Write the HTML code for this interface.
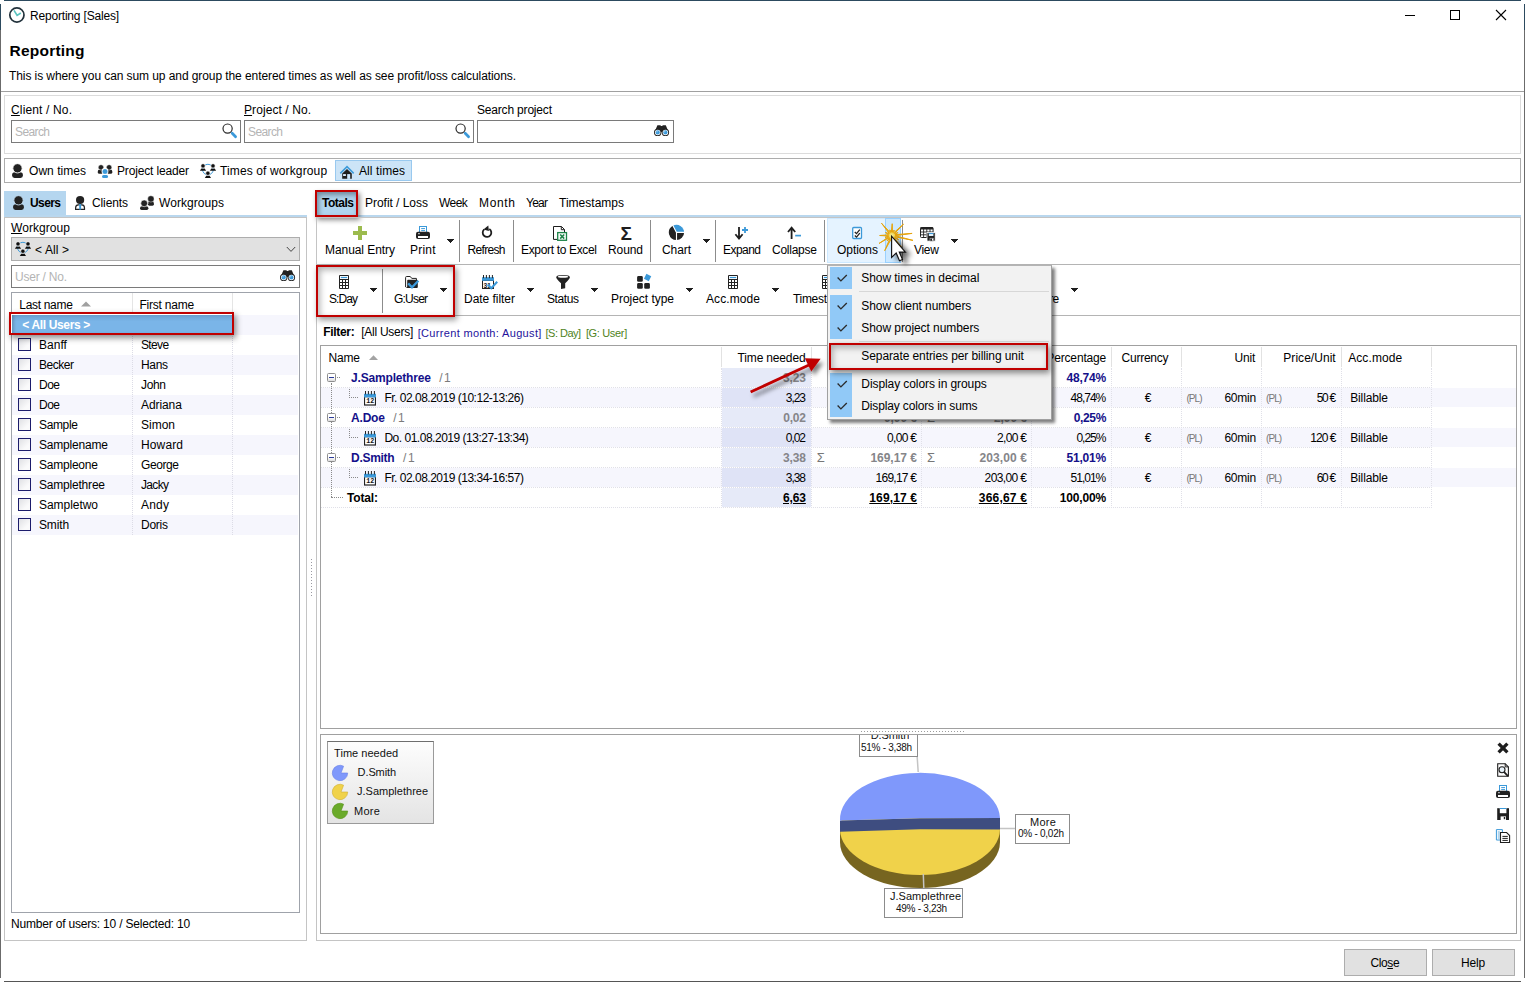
<!DOCTYPE html>
<html lang="en"><head><meta charset="utf-8"><title>Reporting [Sales]</title>
<style>
html,body{margin:0;padding:0;background:#fff;}
body{width:1525px;height:982px;position:relative;overflow:hidden;font-family:"Liberation Sans",sans-serif;font-size:12px;color:#000;}
.b{position:absolute;box-sizing:border-box;display:block;}
.t{position:absolute;white-space:nowrap;display:block;}
u{text-decoration:underline;text-underline-offset:1px;}
</style></head><body>
<div class="b " style="left:4px;top:0px;width:1517px;height:1px;background:#2c4a5f;"></div>
<div class="b " style="left:0px;top:4px;width:1px;height:26px;background:#2c4a5f;"></div>
<div class="b " style="left:0px;top:30px;width:1px;height:948px;background:#6b6b6b;"></div>
<div class="b " style="left:1524px;top:4px;width:1px;height:26px;background:#2c4a5f;"></div>
<div class="b " style="left:1524px;top:30px;width:1px;height:948px;background:#6b6b6b;"></div>
<div class="b " style="left:4px;top:981px;width:1517px;height:1px;background:#555;"></div>
<svg class="b" style="left:7px;top:5px;" width="20" height="20" viewBox="7 5 20 20"><circle cx="16.9" cy="15" r="7.1" fill="#fff" stroke="#22323c" stroke-width="1.7"/><path d="M14 10.4 L17.1 15.4 L20.8 13" fill="none" stroke="#5bc4c0" stroke-width="1.7"/></svg>
<span class="t" style="left:30.00px;top:7.84px;font-size:12px;line-height:16px;letter-spacing:-0.188px;">Reporting [Sales]</span>
<div class="b " style="left:1405px;top:15px;width:10px;height:1px;background:#000;"></div>
<div class="b " style="left:1450px;top:10px;width:10px;height:10px;border:1px solid #000;"></div>
<svg class="b" style="left:1495px;top:9px;" width="12" height="12" viewBox="0 0 12 12"><path d="M1 1 L11 11 M11 1 L1 11" stroke="#000" stroke-width="1.1"/></svg>
<span class="t" style="left:9.50px;top:40.13px;font-size:15.5px;line-height:21px;letter-spacing:0.219px;font-weight:bold;">Reporting</span>
<span class="t" style="left:9.00px;top:67.84px;font-size:12px;line-height:16px;letter-spacing:-0.082px;">This is where you can sum up and group the entered times as well as see profit/loss calculations.</span>
<div class="b " style="left:1px;top:91px;width:1523px;height:1px;background:#a0a0a0;"></div>
<div class="b " style="left:4px;top:95px;width:1517px;height:59px;border:1px solid #dcdcdc;"></div>
<span class="t" style="left:11.00px;top:101.84px;font-size:12px;line-height:16px;letter-spacing:0.148px;"><u>C</u>lient / No.</span>
<span class="t" style="left:244.00px;top:101.84px;font-size:12px;line-height:16px;letter-spacing:0.083px;"><u>P</u>roject / No.</span>
<span class="t" style="left:477.00px;top:101.84px;font-size:12px;line-height:16px;letter-spacing:-0.183px;">Search project</span>
<div class="b " style="left:11px;top:120px;width:230px;height:23px;background:#fff;border:1px solid #7a7a7a;"></div>
<div class="b " style="left:244px;top:120px;width:230px;height:23px;background:#fff;border:1px solid #7a7a7a;"></div>
<div class="b " style="left:477px;top:120px;width:197px;height:23px;background:#fff;border:1px solid #7a7a7a;"></div>
<span class="t" style="left:15.00px;top:123.84px;font-size:12px;line-height:16px;letter-spacing:-0.600px;color:#b4b4b4;">Search</span>
<span class="t" style="left:248.00px;top:123.84px;font-size:12px;line-height:16px;letter-spacing:-0.600px;color:#b4b4b4;">Search</span>
<svg class="b" style="left:222px;top:123px;" width="16" height="16" viewBox="222 123 16 16"><circle cx="227.60" cy="128.60" r="4.6" fill="#fff" stroke="#2a2a2a" stroke-width="1.2"/><path d="M232.20 133.20 L235.60 136.80" stroke="#3b99d9" stroke-width="2.7" stroke-linecap="round"/></svg>
<svg class="b" style="left:455px;top:123px;" width="16" height="16" viewBox="455 123 16 16"><circle cx="460.60" cy="128.60" r="4.6" fill="#fff" stroke="#2a2a2a" stroke-width="1.2"/><path d="M465.20 133.20 L468.60 136.80" stroke="#3b99d9" stroke-width="2.7" stroke-linecap="round"/></svg>
<svg class="b" style="left:653px;top:124px;" width="17" height="14" viewBox="653 124 17 14"><path d="M657.4 125.2 H660.4 L661 126 H662.2 L662.8 125.2 H665.8 L668.6 132 H654.6 Z" fill="#222"/><circle cx="657.70" cy="132.40" r="3.7" fill="#222"/><circle cx="657.70" cy="132.40" r="2.75" fill="#fff"/><circle cx="657.70" cy="132.40" r="2.1" fill="#3b99d9"/><circle cx="657.00" cy="131.70" r=".8" fill="#8fc8ee"/><circle cx="665.40" cy="132.40" r="3.7" fill="#222"/><circle cx="665.40" cy="132.40" r="2.75" fill="#fff"/><circle cx="665.40" cy="132.40" r="2.1" fill="#3b99d9"/><circle cx="664.70" cy="131.70" r=".8" fill="#8fc8ee"/></svg>
<div class="b " style="left:4px;top:158px;width:1517px;height:25px;border:1px solid #adadad;"></div>
<svg class="b" style="left:11px;top:163px;" width="13" height="16" viewBox="11 163 13 16"><path d="M12.10 174.80 Q12.10 172.20 14.70 172.20 H20.30 Q22.90 172.20 22.90 174.80 V175.60 Q22.90 178.00 20.50 178.00 H14.50 Q12.10 178.00 12.10 175.60 Z" fill="#222"/><circle cx="17.50" cy="168.30" r="4.65" fill="#222" stroke="#fff" stroke-width="0.90"/></svg>
<span class="t" style="left:29.00px;top:162.84px;font-size:12px;line-height:16px;letter-spacing:0.047px;">Own times</span>
<svg class="b" style="left:96px;top:163px;" width="18" height="17" viewBox="96 163 18 17"><path d="M97.80 171.52 Q97.80 169.60 99.72 169.60 H102.28 Q104.20 169.60 104.20 171.52 V172.20 Q104.20 173.80 102.60 173.80 H99.40 Q97.80 173.80 97.80 172.20 Z" fill="#222"/><circle cx="101.00" cy="167.35" r="2.70" fill="#222" stroke="#fff" stroke-width="0.50"/><path d="M105.90 171.52 Q105.90 169.60 107.82 169.60 H110.38 Q112.30 169.60 112.30 171.52 V172.20 Q112.30 173.80 110.70 173.80 H107.50 Q105.90 173.80 105.90 172.20 Z" fill="#222"/><circle cx="109.10" cy="167.35" r="2.70" fill="#222" stroke="#fff" stroke-width="0.50"/><circle cx="105" cy="171.4" r="3.4" fill="#fff"/><rect x="101.2" y="174" width="7.7" height="4.6" fill="#fff"/><path d="M102.00 176.50 Q102.00 174.90 103.60 174.90 H106.50 Q108.10 174.90 108.10 176.50 V176.40 Q108.10 178.00 106.50 178.00 H103.60 Q102.00 178.00 102.00 176.40 Z" fill="#3b99d9"/><circle cx="105.00" cy="171.40" r="2.50" fill="#3b99d9" stroke="#fff" stroke-width="0.10"/></svg>
<span class="t" style="left:117.00px;top:162.84px;font-size:12px;line-height:16px;letter-spacing:-0.154px;">Project leader</span>
<svg class="b" style="left:198px;top:163px" width="20" height="17" viewBox="198 163 20 17"><circle cx="207.9" cy="169.6" r="5.3" fill="none" stroke="#3b99d9" stroke-width="1"/><path d="M201.30 168.50 L199.90 170.80 H206.10 L204.70 168.50 Z" fill="#111"/><circle cx="203.00" cy="165.90" r="2.20" fill="#111" stroke="#fff" stroke-width=".7"/><path d="M211.30 168.50 L209.90 170.80 H216.10 L214.70 168.50 Z" fill="#111"/><circle cx="213.00" cy="165.90" r="2.20" fill="#111" stroke="#fff" stroke-width=".7"/><path d="M206.20 175.80 L204.80 178.10 H211.00 L209.60 175.80 Z" fill="#111"/><circle cx="207.90" cy="173.20" r="2.20" fill="#111" stroke="#fff" stroke-width=".7"/></svg>
<span class="t" style="left:220.00px;top:162.84px;font-size:12px;line-height:16px;letter-spacing:0.125px;">Times of workgroup</span>
<div class="b " style="left:335px;top:160px;width:77px;height:21px;background:#cce4f7;border:1px solid #99c9ef;"></div>
<svg class="b" style="left:339px;top:165px;" width="16" height="15" viewBox="339 165 16 15"><path d="M342.2 178.8 V173.6 L347 169.1 L351.8 173.6 V178.8 Z" fill="#1f1f1f"/><rect x="347.2" y="174.1" width="3" height="4.8" fill="#cce8ff"/><rect x="343.1" y="174.1" width="2.8" height="1.9" fill="#dff0ff"/><path d="M340.3 173.4 L347 166.6 L353.7 173.4" fill="none" stroke="#3d9bda" stroke-width="1.5"/></svg>
<span class="t" style="left:359.00px;top:162.84px;font-size:12px;line-height:16px;letter-spacing:0.078px;">All times</span>
<div class="b " style="left:4px;top:191px;width:62px;height:25px;background:#b5d6ef;"></div>
<svg class="b" style="left:12px;top:195px;" width="13" height="16" viewBox="12 195 13 16"><path d="M13.10 206.80 Q13.10 204.20 15.70 204.20 H21.30 Q23.90 204.20 23.90 206.80 V207.60 Q23.90 210.00 21.50 210.00 H15.50 Q13.10 210.00 13.10 207.60 Z" fill="#222"/><circle cx="18.50" cy="200.30" r="4.65" fill="#222" stroke="#c4def2" stroke-width="0.90"/></svg>
<span class="t" style="left:30.00px;top:194.84px;font-size:12px;line-height:16px;letter-spacing:-0.594px;font-weight:bold;">Users</span>
<svg class="b" style="left:74px;top:195px;" width="13" height="16" viewBox="74 195 13 16"><path d="M75.6 209.4 V208 Q75.6 205 78.2 204.8 H82 Q84.5 205 84.5 208 V209.4 Z" fill="#fff" stroke="#222" stroke-width="1.2"/><rect x="79.2" y="203.8" width="1.9" height="5.8" fill="#3b99d9"/><circle cx="80.1" cy="200" r="4.1" fill="#222"/></svg>
<span class="t" style="left:92.00px;top:194.84px;font-size:12px;line-height:16px;letter-spacing:-0.104px;">Clients</span>
<svg class="b" style="left:139px;top:194px;" width="17" height="17" viewBox="139 194 17 17"><path d="M148.00 203.40 Q148.00 201.60 149.80 201.60 H152.10 Q153.90 201.60 153.90 203.40 V204.30 Q153.90 205.70 152.50 205.70 H149.40 Q148.00 205.70 148.00 204.30 Z" fill="#222"/><circle cx="150.90" cy="198.90" r="3.20" fill="#222" stroke="#fff" stroke-width="0.40"/><circle cx="144.2" cy="203.3" r="4" fill="#fff"/><path d="M140.00 208.30 Q140.00 206.30 142.00 206.30 H146.40 Q148.40 206.30 148.40 208.30 V208.30 Q148.40 209.90 146.80 209.90 H141.60 Q140.00 209.90 140.00 208.30 Z" fill="#222"/><circle cx="144.20" cy="203.30" r="3.40" fill="#222" stroke="#fff" stroke-width="0.60"/></svg>
<span class="t" style="left:159.00px;top:194.84px;font-size:12px;line-height:16px;letter-spacing:0.056px;">Workgroups</span>
<div class="b " style="left:4px;top:215px;width:303px;height:2px;background:#b9d7ee;"></div>
<div class="b " style="left:316px;top:215px;width:1205px;height:2px;background:#b9d7ee;"></div>
<span class="t" style="left:365.00px;top:194.84px;font-size:12px;line-height:16px;letter-spacing:-0.031px;">Profit / Loss</span>
<span class="t" style="left:439.00px;top:194.84px;font-size:12px;line-height:16px;letter-spacing:-0.542px;">Week</span>
<span class="t" style="left:479.00px;top:194.84px;font-size:12px;line-height:16px;letter-spacing:0.656px;">Month</span>
<span class="t" style="left:526.00px;top:194.84px;font-size:12px;line-height:16px;letter-spacing:-0.750px;">Year</span>
<span class="t" style="left:559.00px;top:194.84px;font-size:12px;line-height:16px;letter-spacing:0.014px;">Timestamps</span>
<div class="b " style="left:315px;top:190px;width:43px;height:27px;background:#b0d5ef;border:2px solid #c00000;box-shadow:2px 3px 5px rgba(0,0,0,.45),inset 2px 3px 5px rgba(0,0,0,.35);"></div>
<span class="t" style="left:322.00px;top:194.84px;font-size:12px;line-height:16px;letter-spacing:-0.500px;font-weight:bold;">Totals</span>
<div class="b " style="left:4px;top:217px;width:303px;height:724px;border:1px solid #c4c4c4;"></div>
<span class="t" style="left:11.00px;top:219.84px;font-size:12px;line-height:16px;letter-spacing:0.062px;"><u>W</u>orkgroup</span>
<div class="b " style="left:11px;top:237px;width:289px;height:24px;background:#e1e1e1;border:1px solid #adadad;"></div>
<svg class="b" style="left:12.5px;top:241px" width="20" height="17" viewBox="198 163 20 17"><circle cx="207.9" cy="169.6" r="5.3" fill="none" stroke="#3b99d9" stroke-width="1"/><path d="M201.30 168.50 L199.90 170.80 H206.10 L204.70 168.50 Z" fill="#111"/><circle cx="203.00" cy="165.90" r="2.20" fill="#111" stroke="#fff" stroke-width=".7"/><path d="M211.30 168.50 L209.90 170.80 H216.10 L214.70 168.50 Z" fill="#111"/><circle cx="213.00" cy="165.90" r="2.20" fill="#111" stroke="#fff" stroke-width=".7"/><path d="M206.20 175.80 L204.80 178.10 H211.00 L209.60 175.80 Z" fill="#111"/><circle cx="207.90" cy="173.20" r="2.20" fill="#111" stroke="#fff" stroke-width=".7"/></svg>
<span class="t" style="left:35.00px;top:241.84px;font-size:12px;line-height:16px;letter-spacing:0.104px;">&lt; All &gt;</span>
<svg class="b" style="left:286px;top:246px;" width="10" height="7" viewBox="0 0 10 7"><path d="M0.8 1 L5 5.4 L9.2 1" fill="none" stroke="#444" stroke-width="1"/></svg>
<div class="b " style="left:11px;top:265px;width:289px;height:23px;background:#fff;border:1px solid #7a7a7a;"></div>
<span class="t" style="left:15.00px;top:268.84px;font-size:12px;line-height:16px;letter-spacing:-0.222px;color:#b4b4b4;">User / No.</span>
<svg class="b" style="left:279px;top:269px;" width="17" height="14" viewBox="279 269 17 14"><path d="M283.4 270.2 H286.4 L287 271 H288.2 L288.8 270.2 H291.8 L294.6 277 H280.6 Z" fill="#222"/><circle cx="283.70" cy="277.40" r="3.7" fill="#222"/><circle cx="283.70" cy="277.40" r="2.75" fill="#fff"/><circle cx="283.70" cy="277.40" r="2.1" fill="#3b99d9"/><circle cx="283.00" cy="276.70" r=".8" fill="#8fc8ee"/><circle cx="291.40" cy="277.40" r="3.7" fill="#222"/><circle cx="291.40" cy="277.40" r="2.75" fill="#fff"/><circle cx="291.40" cy="277.40" r="2.1" fill="#3b99d9"/><circle cx="290.70" cy="276.70" r=".8" fill="#8fc8ee"/></svg>
<div class="b " style="left:11px;top:292px;width:289px;height:621px;background:#fff;border:1px solid #9fa3ab;"></div>
<span class="t" style="left:19.30px;top:296.84px;font-size:12px;line-height:16px;letter-spacing:-0.312px;">Last name</span>
<svg class="b" style="left:81px;top:301px;" width="10" height="6" viewBox="0 0 10 6"><path d="M0 5.5 L5 0.5 L10 5.5Z" fill="#a0a0a0"/></svg>
<span class="t" style="left:139.40px;top:296.84px;font-size:12px;line-height:16px;letter-spacing:-0.214px;">First name</span>
<div class="b " style="left:132px;top:293px;width:1px;height:20px;background:#e5e5e5;"></div>
<div class="b " style="left:232px;top:293px;width:1px;height:20px;background:#e5e5e5;"></div>
<div class="b " style="left:12px;top:315px;width:286px;height:20px;background:#f6f6fd;"></div>
<div class="b " style="left:12px;top:355px;width:286px;height:20px;background:#f6f6fd;"></div>
<div class="b " style="left:12px;top:395px;width:286px;height:20px;background:#f6f6fd;"></div>
<div class="b " style="left:12px;top:435px;width:286px;height:20px;background:#f6f6fd;"></div>
<div class="b " style="left:12px;top:475px;width:286px;height:20px;background:#f6f6fd;"></div>
<div class="b " style="left:12px;top:515px;width:286px;height:20px;background:#f6f6fd;"></div>
<div class="b " style="left:132px;top:314px;width:0px;height:221px;border-left:1px dotted #dcdce6;"></div>
<div class="b " style="left:232px;top:314px;width:0px;height:221px;border-left:1px dotted #dcdce6;"></div>
<div class="b " style="left:18px;top:338px;width:13px;height:13px;border:1px solid #1c1c6c;background:linear-gradient(135deg,#dfe0e4,#fafafb 70%);"></div>
<span class="t" style="left:39.00px;top:336.84px;font-size:12px;line-height:16px;letter-spacing:0.031px;">Banff</span>
<span class="t" style="left:141.00px;top:336.84px;font-size:12px;line-height:16px;letter-spacing:-0.656px;">Steve</span>
<div class="b " style="left:18px;top:358px;width:13px;height:13px;border:1px solid #1c1c6c;background:linear-gradient(135deg,#dfe0e4,#fafafb 70%);"></div>
<span class="t" style="left:39.00px;top:356.84px;font-size:12px;line-height:16px;letter-spacing:-0.475px;">Becker</span>
<span class="t" style="left:141.00px;top:356.84px;font-size:12px;line-height:16px;letter-spacing:-0.333px;">Hans</span>
<div class="b " style="left:18px;top:378px;width:13px;height:13px;border:1px solid #1c1c6c;background:linear-gradient(135deg,#dfe0e4,#fafafb 70%);"></div>
<span class="t" style="left:39.00px;top:376.84px;font-size:12px;line-height:16px;letter-spacing:-0.500px;">Doe</span>
<span class="t" style="left:141.00px;top:376.84px;font-size:12px;line-height:16px;letter-spacing:-0.333px;">John</span>
<div class="b " style="left:18px;top:398px;width:13px;height:13px;border:1px solid #1c1c6c;background:linear-gradient(135deg,#dfe0e4,#fafafb 70%);"></div>
<span class="t" style="left:39.00px;top:396.84px;font-size:12px;line-height:16px;letter-spacing:-0.500px;">Doe</span>
<span class="t" style="left:141.00px;top:396.84px;font-size:12px;line-height:16px;letter-spacing:-0.083px;">Adriana</span>
<div class="b " style="left:18px;top:418px;width:13px;height:13px;border:1px solid #1c1c6c;background:linear-gradient(135deg,#dfe0e4,#fafafb 70%);"></div>
<span class="t" style="left:39.00px;top:416.84px;font-size:12px;line-height:16px;letter-spacing:-0.350px;">Sample</span>
<span class="t" style="left:141.00px;top:416.84px;font-size:12px;line-height:16px;letter-spacing:0.000px;">Simon</span>
<div class="b " style="left:18px;top:438px;width:13px;height:13px;border:1px solid #1c1c6c;background:linear-gradient(135deg,#dfe0e4,#fafafb 70%);"></div>
<span class="t" style="left:39.00px;top:436.84px;font-size:12px;line-height:16px;letter-spacing:-0.194px;">Samplename</span>
<span class="t" style="left:141.00px;top:436.84px;font-size:12px;line-height:16px;letter-spacing:0.125px;">Howard</span>
<div class="b " style="left:18px;top:458px;width:13px;height:13px;border:1px solid #1c1c6c;background:linear-gradient(135deg,#dfe0e4,#fafafb 70%);"></div>
<span class="t" style="left:39.00px;top:456.84px;font-size:12px;line-height:16px;letter-spacing:-0.219px;">Sampleone</span>
<span class="t" style="left:141.00px;top:456.84px;font-size:12px;line-height:16px;letter-spacing:-0.400px;">George</span>
<div class="b " style="left:18px;top:478px;width:13px;height:13px;border:1px solid #1c1c6c;background:linear-gradient(135deg,#dfe0e4,#fafafb 70%);"></div>
<span class="t" style="left:39.00px;top:476.84px;font-size:12px;line-height:16px;letter-spacing:-0.200px;">Samplethree</span>
<span class="t" style="left:141.00px;top:476.84px;font-size:12px;line-height:16px;letter-spacing:-0.656px;">Jacky</span>
<div class="b " style="left:18px;top:498px;width:13px;height:13px;border:1px solid #1c1c6c;background:linear-gradient(135deg,#dfe0e4,#fafafb 70%);"></div>
<span class="t" style="left:39.00px;top:496.84px;font-size:12px;line-height:16px;letter-spacing:-0.047px;">Sampletwo</span>
<span class="t" style="left:141.00px;top:496.84px;font-size:12px;line-height:16px;letter-spacing:0.208px;">Andy</span>
<div class="b " style="left:18px;top:518px;width:13px;height:13px;border:1px solid #1c1c6c;background:linear-gradient(135deg,#dfe0e4,#fafafb 70%);"></div>
<span class="t" style="left:39.00px;top:516.84px;font-size:12px;line-height:16px;letter-spacing:-0.156px;">Smith</span>
<span class="t" style="left:141.00px;top:516.84px;font-size:12px;line-height:16px;letter-spacing:-0.250px;">Doris</span>
<div class="b " style="left:9px;top:312px;width:225px;height:23px;background:#fff;border:2px solid #c00000;box-shadow:2px 3px 6px rgba(0,0,0,.45);"></div>
<div class="b " style="left:12px;top:315px;width:220px;height:18px;background:linear-gradient(#6b9fd0,#7ab5e8 35%,#7ab5e8);box-shadow:inset 3px 0 3px -1px rgba(0,0,0,.18);"></div>
<span class="t" style="left:22.30px;top:316.84px;font-size:12px;line-height:16px;letter-spacing:-0.354px;font-weight:bold;color:#fff;">&lt; All Users &gt;</span>
<span class="t" style="left:11.00px;top:915.84px;font-size:12px;line-height:16px;letter-spacing:-0.193px;">Number of users: 10 / Selected: 10</span>
<div class="b " style="left:311px;top:559px;width:1px;height:1px;background:#9a9aa2;"></div>
<div class="b " style="left:311px;top:562px;width:1px;height:1px;background:#9a9aa2;"></div>
<div class="b " style="left:311px;top:565px;width:1px;height:1px;background:#9a9aa2;"></div>
<div class="b " style="left:311px;top:568px;width:1px;height:1px;background:#9a9aa2;"></div>
<div class="b " style="left:311px;top:571px;width:1px;height:1px;background:#9a9aa2;"></div>
<div class="b " style="left:311px;top:574px;width:1px;height:1px;background:#9a9aa2;"></div>
<div class="b " style="left:311px;top:577px;width:1px;height:1px;background:#9a9aa2;"></div>
<div class="b " style="left:311px;top:580px;width:1px;height:1px;background:#9a9aa2;"></div>
<div class="b " style="left:311px;top:583px;width:1px;height:1px;background:#9a9aa2;"></div>
<div class="b " style="left:311px;top:586px;width:1px;height:1px;background:#9a9aa2;"></div>
<div class="b " style="left:311px;top:589px;width:1px;height:1px;background:#9a9aa2;"></div>
<div class="b " style="left:311px;top:592px;width:1px;height:1px;background:#9a9aa2;"></div>
<div class="b " style="left:311px;top:595px;width:1px;height:1px;background:#9a9aa2;"></div>
<div class="b " style="left:316px;top:217px;width:1205px;height:724px;border:1px solid #c4c4c4;"></div>
<div class="b " style="left:317px;top:264px;width:1203px;height:1px;background:#b4b4b4;"></div>
<div class="b " style="left:317px;top:315px;width:1203px;height:1px;background:#b4b4b4;"></div>
<div class="b " style="left:827px;top:218px;width:74px;height:45px;background:#e5f3ff;border:1px solid #cce8ff;"></div>
<div class="b " style="left:885px;top:218px;width:16px;height:45px;background:#cce8ff;border:1px solid #99d1ff;"></div>
<div class="b " style="left:902px;top:220px;width:1px;height:42px;background:#8c8c8c;"></div>
<svg class="b" style="left:353px;top:226px;" width="14" height="14" viewBox="353 226 14 14"><path d="M358 226 H362 V231 H367 V235 H362 V240 H358 V235 H353 V231 H358Z" fill="#9cbb4e"/></svg>
<span class="t" style="left:325.00px;top:241.84px;font-size:12px;line-height:16px;letter-spacing:-0.068px;">Manual Entry</span>
<svg class="b" style="left:416px;top:226px;" width="14" height="14" viewBox="416 226 14 14"><rect x="419.5" y="226.5" width="7" height="6.5" fill="#fff" stroke="#3b99d9" stroke-width="1"/><path d="M421.2 228.6 H425 M421.2 230.6 H425" stroke="#3b99d9" stroke-width="1"/><rect x="416" y="231.8" width="14" height="7.2" rx="2" fill="#222"/><rect x="418" y="236" width="10" height="2" fill="#fff"/><rect x="418.2" y="233.2" width="1.5" height="1" fill="#fff"/></svg>
<span class="t" style="left:410.00px;top:241.84px;font-size:12px;line-height:16px;letter-spacing:0.219px;">Print</span>
<svg class="b" style="left:447px;top:239px;shape-rendering:crispEdges;" width="7" height="4" viewBox="447 239 7 4"><rect x="447" y="239" width="7" height="1" fill="#1e1e1e"/><rect x="448" y="240" width="5" height="1" fill="#1e1e1e"/><rect x="449" y="241" width="3" height="1" fill="#1e1e1e"/><rect x="450" y="242" width="1" height="1" fill="#1e1e1e"/></svg>
<div class="b " style="left:459px;top:220px;width:1px;height:42px;background:#8c8c8c;"></div>
<svg class="b" style="left:480px;top:224px;" width="14" height="16" viewBox="480 224 14 16"><path d="M489.3 229 A4.3 4.3 0 1 1 484.2 229.4" fill="none" stroke="#1e1e1e" stroke-width="1.8"/><path d="M483.4 229.6 L488.3 225.6 L488.9 231 Z" fill="#1e1e1e"/></svg>
<span class="t" style="left:467.50px;top:241.84px;font-size:12px;line-height:16px;letter-spacing:-0.667px;">Refresh</span>
<div class="b " style="left:513px;top:220px;width:1px;height:42px;background:#8c8c8c;"></div>
<svg class="b" style="left:552px;top:225px;" width="16" height="17" viewBox="552 225 16 17"><path d="M553.5 226.5 H561.5 L564.5 229.5 V232 M553.5 226.5 V239.4 H557" fill="none" stroke="#1e1e1e" stroke-width="1"/><path d="M561.3 226.6 V229.7 H564.4" fill="none" stroke="#1e1e1e" stroke-width="1"/><rect x="557.7" y="232.6" width="8.8" height="7.7" fill="#fff" stroke="#1e8449" stroke-width="1.3"/><path d="M560.2 234.5 L564.2 238.6 M564.2 234.5 L560.2 238.6" stroke="#1e8449" stroke-width="1.6"/></svg>
<span class="t" style="left:521.00px;top:241.84px;font-size:12px;line-height:16px;letter-spacing:-0.339px;">Export to Excel</span>
<span class="t" style="left:620.50px;top:220.92px;font-size:19px;line-height:25px;letter-spacing:0.000px;font-weight:bold;color:#1e1e1e;font-family:"Liberation Serif",serif;">Σ</span>
<span class="t" style="left:608.00px;top:241.84px;font-size:12px;line-height:16px;letter-spacing:-0.094px;">Round</span>
<div class="b " style="left:650px;top:220px;width:1px;height:42px;background:#8c8c8c;"></div>
<svg class="b" style="left:668px;top:224px;" width="18" height="18" viewBox="668 224 18 18"><path d="M676.50 232.40 L672.93 225.69 A7.6 7.6 0 0 0 676.50 240.00 Z" fill="#222"/><path d="M676.50 232.40 L672.93 225.69 A7.6 7.6 0 0 1 684.10 232.40 Z" fill="#3b99d9"/><path d="M676.50 232.40 L684.10 232.40 A7.6 7.6 0 0 1 676.50 240.00 Z" fill="#222"/><path d="M676.50 232.40 L672.46 224.81 M676.50 232.40 L685.10 232.40 M676.50 232.40 L676.50 241.00" stroke="#fff" stroke-width="1.1"/></svg>
<span class="t" style="left:662.00px;top:241.84px;font-size:12px;line-height:16px;letter-spacing:-0.094px;">Chart</span>
<svg class="b" style="left:703px;top:239px;shape-rendering:crispEdges;" width="7" height="4" viewBox="703 239 7 4"><rect x="703" y="239" width="7" height="1" fill="#1e1e1e"/><rect x="704" y="240" width="5" height="1" fill="#1e1e1e"/><rect x="705" y="241" width="3" height="1" fill="#1e1e1e"/><rect x="706" y="242" width="1" height="1" fill="#1e1e1e"/></svg>
<div class="b " style="left:715px;top:220px;width:1px;height:42px;background:#8c8c8c;"></div>
<svg class="b" style="left:734px;top:226px;" width="15" height="15" viewBox="734 226 15 15"><path d="M739 227 V238 M735.4 234.2 L739 238.6 L742.6 234.2" fill="none" stroke="#1e1e1e" stroke-width="1.8"/><path d="M745 227 V233 M742 230 H748" stroke="#3b99d9" stroke-width="1.8"/></svg>
<span class="t" style="left:723.00px;top:241.84px;font-size:12px;line-height:16px;letter-spacing:-0.550px;">Expand</span>
<svg class="b" style="left:787px;top:226px;" width="15" height="15" viewBox="787 226 15 15"><path d="M791.6 239 V228 M788 232 L791.6 227.6 L795.2 232" fill="none" stroke="#1e1e1e" stroke-width="1.8"/><path d="M795.2 235.6 H801" stroke="#3b99d9" stroke-width="1.7"/></svg>
<span class="t" style="left:772.00px;top:241.84px;font-size:12px;line-height:16px;letter-spacing:-0.250px;">Collapse</span>
<div class="b " style="left:824px;top:220px;width:1px;height:42px;background:#8c8c8c;"></div>
<svg class="b" style="left:851px;top:226px;" width="13" height="15" viewBox="851 226 13 15"><rect x="852.7" y="227.5" width="8.8" height="11" rx="1" fill="#fff" stroke="#3b99d9" stroke-width="1.3"/><path d="M854.8 232 L856.5 233.6 L859.8 229.6 M854.8 235.5 L856.5 237.1 L859.8 233.1" fill="none" stroke="#222" stroke-width="1.3"/></svg>
<span class="t" style="left:837.00px;top:241.84px;font-size:12px;line-height:16px;letter-spacing:-0.062px;">Options</span>
<svg class="b" style="left:919px;top:226px;" width="18" height="17" viewBox="919 226 18 17"><rect x="920.5" y="227.5" width="12.6" height="10" rx="1" fill="#fff" stroke="#222" stroke-width="1"/><rect x="920.5" y="227.2" width="12.6" height="2.3" fill="#222"/><path d="M920.5 232 H933 M920.5 234.8 H933 M923.6 229 V237.5 M926.8 229 V237.5 M930 229 V237.5" stroke="#222" stroke-width=".9"/><rect x="927" y="232.5" width="8.2" height="8.6" fill="#222" stroke="#fff" stroke-width=".8"/><rect x="928.8" y="233" width="4.6" height="3" fill="#dff0fb"/><rect x="928.8" y="233" width="4.6" height="1" fill="#3b99d9"/><rect x="930" y="238.2" width="3.4" height="2.9" fill="#222" stroke="#ddd" stroke-width=".5"/><rect x="932" y="238.6" width="1" height="2" fill="#fff"/></svg>
<span class="t" style="left:914.00px;top:241.84px;font-size:12px;line-height:16px;letter-spacing:-0.292px;">View</span>
<svg class="b" style="left:951px;top:239px;shape-rendering:crispEdges;" width="7" height="4" viewBox="951 239 7 4"><rect x="951" y="239" width="7" height="1" fill="#1e1e1e"/><rect x="952" y="240" width="5" height="1" fill="#1e1e1e"/><rect x="953" y="241" width="3" height="1" fill="#1e1e1e"/><rect x="954" y="242" width="1" height="1" fill="#1e1e1e"/></svg>
<svg class="b" style="left:339px;top:275px;" width="10" height="14" viewBox="339 275 10 14"><rect x="339" y="275" width="10" height="14" rx="1" fill="#222"/><rect x="340" y="276" width="8" height="3" fill="#fff"/><rect x="340.8" y="276.9" width="6.4" height="1.2" fill="#3b99d9"/><rect x="340" y="280" width="2" height="2" fill="#fff"/><rect x="340" y="283" width="2" height="2" fill="#fff"/><rect x="340" y="286" width="2" height="2" fill="#fff"/><rect x="343" y="280" width="2" height="2" fill="#fff"/><rect x="343" y="283" width="2" height="2" fill="#fff"/><rect x="343" y="286" width="2" height="2" fill="#fff"/><rect x="346" y="280" width="2" height="2" fill="#fff"/><rect x="346" y="283" width="2" height="2" fill="#fff"/><rect x="346" y="286" width="2" height="2" fill="#fff"/></svg>
<span class="t" style="left:329.00px;top:290.84px;font-size:12px;line-height:16px;letter-spacing:-0.906px;">S:Day</span>
<svg class="b" style="left:370px;top:288px;shape-rendering:crispEdges;" width="7" height="4" viewBox="370 288 7 4"><rect x="370" y="288" width="7" height="1" fill="#1e1e1e"/><rect x="371" y="289" width="5" height="1" fill="#1e1e1e"/><rect x="372" y="290" width="3" height="1" fill="#1e1e1e"/><rect x="373" y="291" width="1" height="1" fill="#1e1e1e"/></svg>
<div class="b " style="left:382px;top:269px;width:1px;height:44px;background:#8c8c8c;"></div>
<svg class="b" style="left:404px;top:275px;" width="16" height="15" viewBox="404 275 16 15"><path d="M405.6 287 V277.6 Q405.6 276.5 406.6 276.5 H410 L412 278.4 H416.4 V280" fill="#fff" stroke="#222" stroke-width="1"/><path d="M405.6 287.6 Q405.4 288 406.4 288 H416.8 Q417.8 288 417.8 287 V280.8 Q417.8 279.8 416.8 279.8 H408 Q407.2 279.8 407.2 280.8 V286.4 Q407 287.6 405.6 287.6Z" fill="#222"/><path d="M408.2 283.4 L412 287.4 L418.4 280.8" fill="none" stroke="#3b99d9" stroke-width="2.3"/></svg>
<span class="t" style="left:394.00px;top:290.84px;font-size:12px;line-height:16px;letter-spacing:-0.800px;">G:User</span>
<svg class="b" style="left:440px;top:288px;shape-rendering:crispEdges;" width="7" height="4" viewBox="440 288 7 4"><rect x="440" y="288" width="7" height="1" fill="#1e1e1e"/><rect x="441" y="289" width="5" height="1" fill="#1e1e1e"/><rect x="442" y="290" width="3" height="1" fill="#1e1e1e"/><rect x="443" y="291" width="1" height="1" fill="#1e1e1e"/></svg>
<svg class="b" style="left:481px;top:274px;" width="18" height="17" viewBox="481 274 18 17"><rect x="482.5" y="280.5" width="11" height="8" fill="#fff" stroke="#222" stroke-width="1"/><rect x="482" y="277.2" width="12" height="3.6" fill="#3b99d9"/><path d="M483.5 275 V278.2 M486.4 275 V278.2 M489.4 275 V278.2 M492.4 275 V278.2" stroke="#222" stroke-width="1"/><text x="483.6" y="287.6" font-size="7.6" font-weight="bold" font-family="Liberation Sans,sans-serif" fill="#222" textLength="7.4" lengthAdjust="spacingAndGlyphs">31</text><path d="M487.8 284.6 L491.3 288.3 L497.2 281.8" fill="none" stroke="#3b99d9" stroke-width="2.1"/></svg>
<span class="t" style="left:464.00px;top:290.84px;font-size:12px;line-height:16px;letter-spacing:-0.037px;">Date filter</span>
<svg class="b" style="left:527px;top:288px;shape-rendering:crispEdges;" width="7" height="4" viewBox="527 288 7 4"><rect x="527" y="288" width="7" height="1" fill="#1e1e1e"/><rect x="528" y="289" width="5" height="1" fill="#1e1e1e"/><rect x="529" y="290" width="3" height="1" fill="#1e1e1e"/><rect x="530" y="291" width="1" height="1" fill="#1e1e1e"/></svg>
<svg class="b" style="left:555px;top:274px;" width="16" height="16" viewBox="555 274 16 16"><path d="M556.2 277.4 Q556.2 275 563 275 Q569.9 275 569.9 277.4 Q569.9 278.6 565.2 283.2 V288.2 L561 289 V283.2 Q556.2 278.6 556.2 277.4Z" fill="#222"/><ellipse cx="563" cy="276.8" rx="5.2" ry="1" fill="#fff"/></svg>
<span class="t" style="left:547.00px;top:290.84px;font-size:12px;line-height:16px;letter-spacing:-0.400px;">Status</span>
<svg class="b" style="left:591px;top:288px;shape-rendering:crispEdges;" width="7" height="4" viewBox="591 288 7 4"><rect x="591" y="288" width="7" height="1" fill="#1e1e1e"/><rect x="592" y="289" width="5" height="1" fill="#1e1e1e"/><rect x="593" y="290" width="3" height="1" fill="#1e1e1e"/><rect x="594" y="291" width="1" height="1" fill="#1e1e1e"/></svg>
<svg class="b" style="left:636px;top:272px;" width="17" height="18" viewBox="636 272 17 18"><rect x="637.1" y="276.1" width="5.7" height="5.7" rx="1.3" fill="#222"/><rect x="637.1" y="283.1" width="5.7" height="5.7" rx="1.3" fill="#222"/><rect x="644.2" y="283.1" width="5.7" height="5.7" rx="1.3" fill="#222"/><rect x="644.9" y="274.8" width="5.4" height="5.4" fill="#3b99d9" transform="rotate(27 647.6 277.5)"/></svg>
<span class="t" style="left:611.00px;top:290.84px;font-size:12px;line-height:16px;letter-spacing:-0.034px;">Project type</span>
<svg class="b" style="left:686px;top:288px;shape-rendering:crispEdges;" width="7" height="4" viewBox="686 288 7 4"><rect x="686" y="288" width="7" height="1" fill="#1e1e1e"/><rect x="687" y="289" width="5" height="1" fill="#1e1e1e"/><rect x="688" y="290" width="3" height="1" fill="#1e1e1e"/><rect x="689" y="291" width="1" height="1" fill="#1e1e1e"/></svg>
<svg class="b" style="left:728px;top:275px;" width="10" height="14" viewBox="728 275 10 14"><rect x="728" y="275" width="10" height="14" rx="1" fill="#222"/><rect x="729" y="276" width="8" height="3" fill="#fff"/><rect x="729.8" y="276.9" width="6.4" height="1.2" fill="#3b99d9"/><rect x="729" y="280" width="2" height="2" fill="#fff"/><rect x="729" y="283" width="2" height="2" fill="#fff"/><rect x="729" y="286" width="2" height="2" fill="#fff"/><rect x="732" y="280" width="2" height="2" fill="#fff"/><rect x="732" y="283" width="2" height="2" fill="#fff"/><rect x="732" y="286" width="2" height="2" fill="#fff"/><rect x="735" y="280" width="2" height="2" fill="#fff"/><rect x="735" y="283" width="2" height="2" fill="#fff"/><rect x="735" y="286" width="2" height="2" fill="#fff"/></svg>
<span class="t" style="left:706.00px;top:290.84px;font-size:12px;line-height:16px;letter-spacing:0.089px;">Acc.mode</span>
<svg class="b" style="left:772px;top:288px;shape-rendering:crispEdges;" width="7" height="4" viewBox="772 288 7 4"><rect x="772" y="288" width="7" height="1" fill="#1e1e1e"/><rect x="773" y="289" width="5" height="1" fill="#1e1e1e"/><rect x="774" y="290" width="3" height="1" fill="#1e1e1e"/><rect x="775" y="291" width="1" height="1" fill="#1e1e1e"/></svg>
<svg class="b" style="left:822px;top:275px;" width="10" height="14" viewBox="822 275 10 14"><rect x="822" y="275" width="10" height="14" rx="1" fill="#222"/><rect x="823" y="276" width="8" height="3" fill="#fff"/><rect x="823.8" y="276.9" width="6.4" height="1.2" fill="#3b99d9"/><rect x="823" y="280" width="2" height="2" fill="#fff"/><rect x="823" y="283" width="2" height="2" fill="#fff"/><rect x="823" y="286" width="2" height="2" fill="#fff"/><rect x="826" y="280" width="2" height="2" fill="#fff"/><rect x="826" y="283" width="2" height="2" fill="#fff"/><rect x="826" y="286" width="2" height="2" fill="#fff"/><rect x="829" y="280" width="2" height="2" fill="#fff"/><rect x="829" y="283" width="2" height="2" fill="#fff"/><rect x="829" y="286" width="2" height="2" fill="#fff"/></svg>
<span class="t" style="left:793.00px;top:290.84px;font-size:12px;line-height:16px;letter-spacing:-0.319px;">Timestamps</span>
<span class="t" style="left:1049.60px;top:290.84px;font-size:12px;line-height:16px;letter-spacing:-1.025px;">re</span>
<svg class="b" style="left:1071px;top:288px;shape-rendering:crispEdges;" width="7" height="4" viewBox="1071 288 7 4"><rect x="1071" y="288" width="7" height="1" fill="#1e1e1e"/><rect x="1072" y="289" width="5" height="1" fill="#1e1e1e"/><rect x="1073" y="290" width="3" height="1" fill="#1e1e1e"/><rect x="1074" y="291" width="1" height="1" fill="#1e1e1e"/></svg>
<div class="b " style="left:316px;top:265px;width:139px;height:52px;border:2px solid #c00000;box-shadow:2px 3px 6px rgba(0,0,0,.4),inset 2px 3px 6px rgba(0,0,0,.3);"></div>
<span class="t" style="left:323.20px;top:323.84px;font-size:12px;line-height:16px;letter-spacing:-0.312px;font-weight:bold;">Filter:</span>
<span class="t" style="left:361.20px;top:323.84px;font-size:12px;line-height:16px;letter-spacing:-0.263px;">[All Users]</span>
<span class="t" style="left:417.70px;top:325.69px;font-size:11px;line-height:15px;letter-spacing:0.340px;color:#24129c;">[Current month: August]</span>
<span class="t" style="left:545.60px;top:325.69px;font-size:11px;line-height:15px;letter-spacing:-0.532px;color:#4f831c;">[S: Day]</span>
<span class="t" style="left:585.90px;top:325.69px;font-size:11px;line-height:15px;letter-spacing:-0.338px;color:#4f831c;">[G: User]</span>
<div class="b " style="left:320px;top:345px;width:1197px;height:384px;background:#fff;border:1px solid #a0a0a0;"></div>
<div class="b " style="left:721px;top:347px;width:1px;height:20px;background:#e2e2e2;"></div>
<div class="b " style="left:811px;top:347px;width:1px;height:20px;background:#e2e2e2;"></div>
<div class="b " style="left:921px;top:347px;width:1px;height:20px;background:#e2e2e2;"></div>
<div class="b " style="left:1031px;top:347px;width:1px;height:20px;background:#e2e2e2;"></div>
<div class="b " style="left:1111px;top:347px;width:1px;height:20px;background:#e2e2e2;"></div>
<div class="b " style="left:1181px;top:347px;width:1px;height:20px;background:#e2e2e2;"></div>
<div class="b " style="left:1261px;top:347px;width:1px;height:20px;background:#e2e2e2;"></div>
<div class="b " style="left:1341px;top:347px;width:1px;height:20px;background:#e2e2e2;"></div>
<div class="b " style="left:1431px;top:347px;width:1px;height:20px;background:#e2e2e2;"></div>
<span class="t" style="left:328.50px;top:349.84px;font-size:12px;line-height:16px;letter-spacing:-0.167px;">Name</span>
<svg class="b" style="left:369px;top:355px;" width="9" height="5" viewBox="0 0 9 5"><path d="M0 5 L4.5 0.3 L9 5Z" fill="#a3a3a3"/></svg>
<span class="t" style="left:737.60px;top:349.84px;font-size:12px;line-height:16px;letter-spacing:-0.163px;">Time needed</span>
<span class="t" style="left:1046.30px;top:349.84px;font-size:12px;line-height:16px;letter-spacing:-0.153px;">Percentage</span>
<span class="t" style="left:1121.50px;top:349.84px;font-size:12px;line-height:16px;letter-spacing:-0.232px;">Currency</span>
<span class="t" style="left:1234.40px;top:349.84px;font-size:12px;line-height:16px;letter-spacing:-0.125px;">Unit</span>
<span class="t" style="left:1283.30px;top:349.84px;font-size:12px;line-height:16px;letter-spacing:0.044px;">Price/Unit</span>
<span class="t" style="left:1348.20px;top:349.84px;font-size:12px;line-height:16px;letter-spacing:0.089px;">Acc.mode</span>
<div class="b " style="left:722px;top:368px;width:89px;height:19px;background:#e6eaf8;"></div>
<div class="b " style="left:321px;top:388px;width:1195px;height:19px;background:#f6f6fd;"></div>
<div class="b " style="left:722px;top:388px;width:89px;height:19px;background:#dfe3f6;"></div>
<div class="b " style="left:722px;top:408px;width:89px;height:19px;background:#e6eaf8;"></div>
<div class="b " style="left:321px;top:428px;width:1195px;height:19px;background:#f6f6fd;"></div>
<div class="b " style="left:722px;top:428px;width:89px;height:19px;background:#dfe3f6;"></div>
<div class="b " style="left:722px;top:448px;width:89px;height:19px;background:#e6eaf8;"></div>
<div class="b " style="left:321px;top:468px;width:1195px;height:19px;background:#f6f6fd;"></div>
<div class="b " style="left:722px;top:468px;width:89px;height:19px;background:#dfe3f6;"></div>
<div class="b " style="left:722px;top:488px;width:89px;height:19px;background:#e6eaf8;"></div>
<div class="b " style="left:321px;top:387px;width:1111px;height:0px;border-top:1px dotted #e0e0e8;"></div>
<div class="b " style="left:321px;top:407px;width:1111px;height:0px;border-top:1px dotted #e0e0e8;"></div>
<div class="b " style="left:321px;top:427px;width:1111px;height:0px;border-top:1px dotted #e0e0e8;"></div>
<div class="b " style="left:321px;top:447px;width:1111px;height:0px;border-top:1px dotted #e0e0e8;"></div>
<div class="b " style="left:321px;top:467px;width:1111px;height:0px;border-top:1px dotted #e0e0e8;"></div>
<div class="b " style="left:321px;top:487px;width:1111px;height:0px;border-top:1px dotted #e0e0e8;"></div>
<div class="b " style="left:321px;top:507px;width:1111px;height:0px;border-top:1px dotted #e0e0e8;"></div>
<div class="b " style="left:721px;top:368px;width:0px;height:140px;border-left:1px dotted #e0e0e8;"></div>
<div class="b " style="left:811px;top:368px;width:0px;height:140px;border-left:1px dotted #e0e0e8;"></div>
<div class="b " style="left:921px;top:368px;width:0px;height:140px;border-left:1px dotted #e0e0e8;"></div>
<div class="b " style="left:1031px;top:368px;width:0px;height:140px;border-left:1px dotted #e0e0e8;"></div>
<div class="b " style="left:1111px;top:368px;width:0px;height:140px;border-left:1px dotted #e0e0e8;"></div>
<div class="b " style="left:1181px;top:368px;width:0px;height:140px;border-left:1px dotted #e0e0e8;"></div>
<div class="b " style="left:1261px;top:368px;width:0px;height:140px;border-left:1px dotted #e0e0e8;"></div>
<div class="b " style="left:1341px;top:368px;width:0px;height:140px;border-left:1px dotted #e0e0e8;"></div>
<div class="b " style="left:1431px;top:368px;width:0px;height:140px;border-left:1px dotted #e0e0e8;"></div>
<div class="b " style="left:722px;top:367px;width:89px;height:0px;border-top:1px dotted #fff;"></div>
<div class="b " style="left:722px;top:387px;width:89px;height:0px;border-top:1px dotted #fff;"></div>
<div class="b " style="left:722px;top:407px;width:89px;height:0px;border-top:1px dotted #fff;"></div>
<div class="b " style="left:722px;top:427px;width:89px;height:0px;border-top:1px dotted #fff;"></div>
<div class="b " style="left:722px;top:447px;width:89px;height:0px;border-top:1px dotted #fff;"></div>
<div class="b " style="left:722px;top:467px;width:89px;height:0px;border-top:1px dotted #fff;"></div>
<div class="b " style="left:722px;top:487px;width:89px;height:0px;border-top:1px dotted #fff;"></div>
<div class="b " style="left:722px;top:507px;width:89px;height:0px;border-top:1px dotted #fff;"></div>
<div class="b " style="left:331px;top:383px;width:0px;height:114px;border-left:1px dotted #8a8a8a;"></div>
<div class="b " style="left:327px;top:373px;width:9px;height:9px;border:1px solid #8e8e8e;border-radius:1.5px;background:linear-gradient(#fff 45%,#dcdcdc);"></div>
<div class="b " style="left:329px;top:377px;width:5px;height:1px;background:#2a3a9a;"></div>
<div class="b " style="left:337px;top:377px;width:1px;height:1px;background:#8a8a8a;"></div>
<div class="b " style="left:339px;top:377px;width:1px;height:1px;background:#8a8a8a;"></div>
<span class="t" style="left:351.10px;top:369.84px;font-size:12px;line-height:16px;letter-spacing:-0.192px;font-weight:bold;color:#14108a;">J.Samplethree</span>
<span class="t" style="left:439.30px;top:369.84px;font-size:12px;line-height:16px;letter-spacing:-0.938px;color:#7b7b7b;">/ 1</span>
<div class="b " style="left:349px;top:389px;width:0px;height:9px;border-left:1px dotted #8a8a8a;"></div>
<div class="b " style="left:349px;top:397px;width:9px;height:0px;border-top:1px dotted #8a8a8a;"></div>
<svg class="b" style="left:364px;top:391px;" width="12" height="15" viewBox="364 391 12 15"><rect x="364.5" y="396.6" width="11" height="8.4" fill="#fff" stroke="#222" stroke-width="1.2"/><rect x="364" y="393.8" width="12" height="3.6" fill="#3b99d9"/><path d="M365.5 391 V394.4 M368.4 391 V394.4 M371.4 391 V394.4 M374.4 391 V394.4" stroke="#222" stroke-width="1"/><text x="366.2" y="403.2" font-size="6.4" font-weight="bold" font-family="Liberation Mono,monospace" fill="#111" textLength="8" lengthAdjust="spacingAndGlyphs">12</text></svg>
<div class="b " style="left:327px;top:413px;width:9px;height:9px;border:1px solid #8e8e8e;border-radius:1.5px;background:linear-gradient(#fff 45%,#dcdcdc);"></div>
<div class="b " style="left:329px;top:417px;width:5px;height:1px;background:#2a3a9a;"></div>
<div class="b " style="left:337px;top:417px;width:1px;height:1px;background:#8a8a8a;"></div>
<div class="b " style="left:339px;top:417px;width:1px;height:1px;background:#8a8a8a;"></div>
<span class="t" style="left:351.10px;top:409.84px;font-size:12px;line-height:16px;letter-spacing:-0.231px;font-weight:bold;color:#14108a;">A.Doe</span>
<span class="t" style="left:393.30px;top:409.84px;font-size:12px;line-height:16px;letter-spacing:-0.938px;color:#7b7b7b;">/ 1</span>
<div class="b " style="left:349px;top:429px;width:0px;height:9px;border-left:1px dotted #8a8a8a;"></div>
<div class="b " style="left:349px;top:437px;width:9px;height:0px;border-top:1px dotted #8a8a8a;"></div>
<svg class="b" style="left:364px;top:431px;" width="12" height="15" viewBox="364 431 12 15"><rect x="364.5" y="436.6" width="11" height="8.4" fill="#fff" stroke="#222" stroke-width="1.2"/><rect x="364" y="433.8" width="12" height="3.6" fill="#3b99d9"/><path d="M365.5 431 V434.4 M368.4 431 V434.4 M371.4 431 V434.4 M374.4 431 V434.4" stroke="#222" stroke-width="1"/><text x="366.2" y="443.2" font-size="6.4" font-weight="bold" font-family="Liberation Mono,monospace" fill="#111" textLength="8" lengthAdjust="spacingAndGlyphs">12</text></svg>
<div class="b " style="left:327px;top:453px;width:9px;height:9px;border:1px solid #8e8e8e;border-radius:1.5px;background:linear-gradient(#fff 45%,#dcdcdc);"></div>
<div class="b " style="left:329px;top:457px;width:5px;height:1px;background:#2a3a9a;"></div>
<div class="b " style="left:337px;top:457px;width:1px;height:1px;background:#8a8a8a;"></div>
<div class="b " style="left:339px;top:457px;width:1px;height:1px;background:#8a8a8a;"></div>
<span class="t" style="left:351.10px;top:449.84px;font-size:12px;line-height:16px;letter-spacing:-0.312px;font-weight:bold;color:#14108a;">D.Smith</span>
<span class="t" style="left:403.10px;top:449.84px;font-size:12px;line-height:16px;letter-spacing:-0.938px;color:#7b7b7b;">/ 1</span>
<div class="b " style="left:349px;top:469px;width:0px;height:9px;border-left:1px dotted #8a8a8a;"></div>
<div class="b " style="left:349px;top:477px;width:9px;height:0px;border-top:1px dotted #8a8a8a;"></div>
<svg class="b" style="left:364px;top:471px;" width="12" height="15" viewBox="364 471 12 15"><rect x="364.5" y="476.6" width="11" height="8.4" fill="#fff" stroke="#222" stroke-width="1.2"/><rect x="364" y="473.8" width="12" height="3.6" fill="#3b99d9"/><path d="M365.5 471 V474.4 M368.4 471 V474.4 M371.4 471 V474.4 M374.4 471 V474.4" stroke="#222" stroke-width="1"/><text x="366.2" y="483.2" font-size="6.4" font-weight="bold" font-family="Liberation Mono,monospace" fill="#111" textLength="8" lengthAdjust="spacingAndGlyphs">12</text></svg>
<div class="b " style="left:331px;top:497px;width:12px;height:0px;border-top:1px dotted #8a8a8a;"></div>
<span class="t" style="left:384.40px;top:389.84px;font-size:12px;line-height:16px;letter-spacing:-0.491px;">Fr. 02.08.2019 (10:12-13:26)</span>
<span class="t" style="left:384.40px;top:429.84px;font-size:12px;line-height:16px;letter-spacing:-0.481px;">Do. 01.08.2019 (13:27-13:34)</span>
<span class="t" style="left:384.40px;top:469.84px;font-size:12px;line-height:16px;letter-spacing:-0.491px;">Fr. 02.08.2019 (13:34-16:57)</span>
<span class="t" style="left:347.00px;top:489.84px;font-size:12px;line-height:16px;letter-spacing:-0.150px;font-weight:bold;">Total:</span>
<span class="t" style="left:783.00px;top:369.84px;font-size:12px;line-height:16px;letter-spacing:-0.125px;font-weight:bold;color:#858589;">3,23</span>
<span class="t" style="left:785.80px;top:389.84px;font-size:12px;line-height:16px;letter-spacing:-1.058px;">3,23</span>
<span class="t" style="left:783.30px;top:409.84px;font-size:12px;line-height:16px;letter-spacing:-0.225px;font-weight:bold;color:#858589;">0,02</span>
<span class="t" style="left:785.80px;top:429.84px;font-size:12px;line-height:16px;letter-spacing:-1.058px;">0,02</span>
<span class="t" style="left:783.00px;top:449.84px;font-size:12px;line-height:16px;letter-spacing:-0.125px;font-weight:bold;color:#858589;">3,38</span>
<span class="t" style="left:785.80px;top:469.84px;font-size:12px;line-height:16px;letter-spacing:-1.058px;">3,38</span>
<span class="t" style="left:783.00px;top:489.84px;font-size:12px;line-height:16px;letter-spacing:-0.125px;font-weight:bold;text-decoration:underline;">6,63</span>
<span class="t" style="left:884.00px;top:409.84px;font-size:12px;line-height:16px;letter-spacing:-0.075px;font-weight:bold;color:#858589;">0,00 €</span>
<span class="t" style="left:994.00px;top:409.84px;font-size:12px;line-height:16px;letter-spacing:-0.075px;font-weight:bold;color:#858589;">2,00 €</span>
<span class="t" style="left:887.00px;top:429.84px;font-size:12px;line-height:16px;letter-spacing:-0.675px;">0,00 €</span>
<span class="t" style="left:997.00px;top:429.84px;font-size:12px;line-height:16px;letter-spacing:-0.675px;">2,00 €</span>
<span class="t" style="left:816.80px;top:449.00px;font-size:13px;line-height:17px;letter-spacing:0.000px;color:#777;font-family:"Liberation Serif",serif;">Σ</span>
<span class="t" style="left:927.00px;top:449.00px;font-size:13px;line-height:17px;letter-spacing:0.000px;color:#777;font-family:"Liberation Serif",serif;">Σ</span>
<span class="t" style="left:927.00px;top:409.00px;font-size:13px;line-height:17px;letter-spacing:0.000px;color:#777;font-family:"Liberation Serif",serif;">Σ</span>
<span class="t" style="left:870.40px;top:449.84px;font-size:12px;line-height:16px;letter-spacing:-0.021px;font-weight:bold;color:#858589;">169,17 €</span>
<span class="t" style="left:979.40px;top:449.84px;font-size:12px;line-height:16px;letter-spacing:0.121px;font-weight:bold;color:#858589;">203,00 €</span>
<span class="t" style="left:875.60px;top:469.84px;font-size:12px;line-height:16px;letter-spacing:-0.764px;">169,17 €</span>
<span class="t" style="left:984.60px;top:469.84px;font-size:12px;line-height:16px;letter-spacing:-0.621px;">203,00 €</span>
<span class="t" style="left:869.30px;top:489.84px;font-size:12px;line-height:16px;letter-spacing:0.136px;font-weight:bold;text-decoration:underline;">169,17 €</span>
<span class="t" style="left:978.80px;top:489.84px;font-size:12px;line-height:16px;letter-spacing:0.207px;font-weight:bold;text-decoration:underline;">366,67 €</span>
<span class="t" style="left:1066.40px;top:369.84px;font-size:12px;line-height:16px;letter-spacing:-0.170px;font-weight:bold;color:#14108a;">48,74%</span>
<span class="t" style="left:1070.60px;top:389.84px;font-size:12px;line-height:16px;letter-spacing:-1.010px;">48,74%</span>
<span class="t" style="left:1073.80px;top:409.84px;font-size:12px;line-height:16px;letter-spacing:-0.375px;font-weight:bold;color:#14108a;">0,25%</span>
<span class="t" style="left:1076.50px;top:429.84px;font-size:12px;line-height:16px;letter-spacing:-1.050px;">0,25%</span>
<span class="t" style="left:1066.40px;top:449.84px;font-size:12px;line-height:16px;letter-spacing:-0.170px;font-weight:bold;color:#14108a;">51,01%</span>
<span class="t" style="left:1070.60px;top:469.84px;font-size:12px;line-height:16px;letter-spacing:-1.010px;">51,01%</span>
<span class="t" style="left:1059.70px;top:489.84px;font-size:12px;line-height:16px;letter-spacing:-0.129px;font-weight:bold;">100,00%</span>
<span class="t" style="left:1144.70px;top:389.84px;font-size:12px;line-height:16px;letter-spacing:0.000px;">€</span>
<span class="t" style="left:1186.50px;top:392.04px;font-size:10px;line-height:13px;letter-spacing:-0.958px;color:#777;">(PL)</span>
<span class="t" style="left:1224.40px;top:389.84px;font-size:12px;line-height:16px;letter-spacing:-0.231px;">60min</span>
<span class="t" style="left:1266.10px;top:392.04px;font-size:10px;line-height:13px;letter-spacing:-0.958px;color:#777;">(PL)</span>
<span class="t" style="left:1350.20px;top:389.84px;font-size:12px;line-height:16px;letter-spacing:-0.121px;">Billable</span>
<span class="t" style="left:1144.70px;top:429.84px;font-size:12px;line-height:16px;letter-spacing:0.000px;">€</span>
<span class="t" style="left:1186.50px;top:432.04px;font-size:10px;line-height:13px;letter-spacing:-0.958px;color:#777;">(PL)</span>
<span class="t" style="left:1224.40px;top:429.84px;font-size:12px;line-height:16px;letter-spacing:-0.231px;">60min</span>
<span class="t" style="left:1266.10px;top:432.04px;font-size:10px;line-height:13px;letter-spacing:-0.958px;color:#777;">(PL)</span>
<span class="t" style="left:1350.20px;top:429.84px;font-size:12px;line-height:16px;letter-spacing:-0.121px;">Billable</span>
<span class="t" style="left:1144.70px;top:469.84px;font-size:12px;line-height:16px;letter-spacing:0.000px;">€</span>
<span class="t" style="left:1186.50px;top:472.04px;font-size:10px;line-height:13px;letter-spacing:-0.958px;color:#777;">(PL)</span>
<span class="t" style="left:1224.40px;top:469.84px;font-size:12px;line-height:16px;letter-spacing:-0.231px;">60min</span>
<span class="t" style="left:1266.10px;top:472.04px;font-size:10px;line-height:13px;letter-spacing:-0.958px;color:#777;">(PL)</span>
<span class="t" style="left:1350.20px;top:469.84px;font-size:12px;line-height:16px;letter-spacing:-0.121px;">Billable</span>
<span class="t" style="left:1316.70px;top:389.84px;font-size:12px;line-height:16px;letter-spacing:-1.258px;">50 €</span>
<span class="t" style="left:1310.30px;top:429.84px;font-size:12px;line-height:16px;letter-spacing:-1.000px;">120 €</span>
<span class="t" style="left:1316.70px;top:469.84px;font-size:12px;line-height:16px;letter-spacing:-1.258px;">60 €</span>
<div class="b " style="left:827px;top:265px;width:225px;height:155px;background:#f2f2f2;border:1px solid #a0a0a0;border-top-color:#b4b4b4;box-shadow:3px 3px 3px rgba(0,0,0,.5);"></div>
<div class="b " style="left:830px;top:267px;width:22px;height:22px;background:#91c9f7;"></div>
<div class="b " style="left:830px;top:295px;width:22px;height:44px;background:#91c9f7;"></div>
<div class="b " style="left:830px;top:373px;width:22px;height:44px;background:#91c9f7;"></div>
<svg class="b" style="left:836.6px;top:274px;" width="11" height="8" viewBox="0 0 11 8"><path d="M0.6 3.6 L3.9 6.9 L9.8 1" fill="none" stroke="#2b2b2b" stroke-width="1.35"/></svg>
<svg class="b" style="left:836.6px;top:302px;" width="11" height="8" viewBox="0 0 11 8"><path d="M0.6 3.6 L3.9 6.9 L9.8 1" fill="none" stroke="#2b2b2b" stroke-width="1.35"/></svg>
<svg class="b" style="left:836.6px;top:324px;" width="11" height="8" viewBox="0 0 11 8"><path d="M0.6 3.6 L3.9 6.9 L9.8 1" fill="none" stroke="#2b2b2b" stroke-width="1.35"/></svg>
<svg class="b" style="left:836.6px;top:380px;" width="11" height="8" viewBox="0 0 11 8"><path d="M0.6 3.6 L3.9 6.9 L9.8 1" fill="none" stroke="#2b2b2b" stroke-width="1.35"/></svg>
<svg class="b" style="left:836.6px;top:402px;" width="11" height="8" viewBox="0 0 11 8"><path d="M0.6 3.6 L3.9 6.9 L9.8 1" fill="none" stroke="#2b2b2b" stroke-width="1.35"/></svg>
<div class="b " style="left:859px;top:291px;width:190px;height:1px;background:#d7d7d7;"></div>
<div class="b " style="left:859px;top:341px;width:190px;height:1px;background:#d7d7d7;"></div>
<span class="t" style="left:861.30px;top:269.84px;font-size:12px;line-height:16px;letter-spacing:-0.069px;">Show times in decimal</span>
<span class="t" style="left:861.30px;top:297.84px;font-size:12px;line-height:16px;letter-spacing:-0.076px;">Show client numbers</span>
<span class="t" style="left:861.30px;top:319.84px;font-size:12px;line-height:16px;letter-spacing:-0.072px;">Show project numbers</span>
<span class="t" style="left:861.30px;top:375.84px;font-size:12px;line-height:16px;letter-spacing:-0.082px;">Display colors in groups</span>
<span class="t" style="left:861.30px;top:397.84px;font-size:12px;line-height:16px;letter-spacing:-0.146px;">Display colors in sums</span>
<div class="b " style="left:829px;top:343px;width:219px;height:27px;background:#f2f2f2;border:2px solid #c00000;box-shadow:2px 3px 6px rgba(0,0,0,.45),inset 2px 3px 6px rgba(0,0,0,.28);"></div>
<span class="t" style="left:861.30px;top:347.84px;font-size:12px;line-height:16px;letter-spacing:-0.090px;">Separate entries per billing unit</span>
<svg class="b" style="left:740px;top:350px;" width="95" height="55" viewBox="740 350 95 55"><defs><filter id="sh" x="-20%" y="-30%" width="150%" height="180%"><feDropShadow dx="3" dy="4" stdDeviation="2" flood-color="#000" flood-opacity=".5"/></filter></defs><g filter="url(#sh)"><path d="M750.6 392 L809 365" stroke="#c00000" stroke-width="2.8"/><path d="M820.6 358.8 L804.8 358.2 L811.3 371.6Z" fill="#c00000"/></g></svg>
<svg class="b" style="left:866px;top:210px;" width="52" height="52" viewBox="866 210 52 52"><defs><radialGradient id="sg" cx="891.8" cy="235.5" r="14" gradientUnits="userSpaceOnUse"><stop offset="0" stop-color="#f2ef9a"/><stop offset=".3" stop-color="#ecc83a"/><stop offset="1" stop-color="#e9a80c"/></radialGradient></defs><path d="M885.5 232.5 L889.2 233.5 L881.5 223.2 L890.2 232.6 L889.8 229.8 L891.3 232.2 L892.2 223.7 L892.5 232.3 L894.2 230.0 L893.7 232.8 L903.5 224.2 L894.5 233.6 L898.1 232.5 L895.0 234.6 L912.1 233.4 L895.1 235.7 L913.0 240.4 L894.8 236.8 L898.6 239.7 L894.3 237.7 L901.4 247.0 L893.1 238.5 L893.9 250.4 L891.3 238.8 L884.7 250.7 L890.0 238.3 L887.2 240.8 L889.3 237.6 L879.1 243.4 L888.8 236.8 L885.1 237.4 L888.5 236.0 L879.6 235.5 L888.6 234.8Z" fill="url(#sg)" stroke="#e6a40c" stroke-width="1" stroke-linejoin="miter"/></svg>
<svg class="b" style="left:884px;top:230px;" width="36" height="40" viewBox="884 230 36 40"><defs><filter id="cs" x="-40%" y="-30%" width="220%" height="180%"><feDropShadow dx="5" dy="3" stdDeviation="2.8" flood-color="#000" flood-opacity=".6"/></filter></defs><path filter="url(#cs)" d="M891.6 236.2 V257.4 L896.2 253.1 L899.5 260.8 L902.5 259.5 L899.3 252.1 H905.4 Z" fill="#fff" stroke="#111" stroke-width="1.15" stroke-linejoin="miter"/></svg>
<div class="b " style="left:861px;top:731px;width:1px;height:1px;background:#9c9c9c;"></div>
<div class="b " style="left:864px;top:731px;width:1px;height:1px;background:#9c9c9c;"></div>
<div class="b " style="left:867px;top:731px;width:1px;height:1px;background:#9c9c9c;"></div>
<div class="b " style="left:870px;top:731px;width:1px;height:1px;background:#9c9c9c;"></div>
<div class="b " style="left:873px;top:731px;width:1px;height:1px;background:#9c9c9c;"></div>
<div class="b " style="left:876px;top:731px;width:1px;height:1px;background:#9c9c9c;"></div>
<div class="b " style="left:879px;top:731px;width:1px;height:1px;background:#9c9c9c;"></div>
<div class="b " style="left:882px;top:731px;width:1px;height:1px;background:#9c9c9c;"></div>
<div class="b " style="left:885px;top:731px;width:1px;height:1px;background:#9c9c9c;"></div>
<div class="b " style="left:888px;top:731px;width:1px;height:1px;background:#9c9c9c;"></div>
<div class="b " style="left:891px;top:731px;width:1px;height:1px;background:#9c9c9c;"></div>
<div class="b " style="left:894px;top:731px;width:1px;height:1px;background:#9c9c9c;"></div>
<div class="b " style="left:897px;top:731px;width:1px;height:1px;background:#9c9c9c;"></div>
<div class="b " style="left:900px;top:731px;width:1px;height:1px;background:#9c9c9c;"></div>
<div class="b " style="left:903px;top:731px;width:1px;height:1px;background:#9c9c9c;"></div>
<div class="b " style="left:906px;top:731px;width:1px;height:1px;background:#9c9c9c;"></div>
<div class="b " style="left:909px;top:731px;width:1px;height:1px;background:#9c9c9c;"></div>
<div class="b " style="left:912px;top:731px;width:1px;height:1px;background:#9c9c9c;"></div>
<div class="b " style="left:915px;top:731px;width:1px;height:1px;background:#9c9c9c;"></div>
<div class="b " style="left:918px;top:731px;width:1px;height:1px;background:#9c9c9c;"></div>
<div class="b " style="left:921px;top:731px;width:1px;height:1px;background:#9c9c9c;"></div>
<div class="b " style="left:924px;top:731px;width:1px;height:1px;background:#9c9c9c;"></div>
<div class="b " style="left:927px;top:731px;width:1px;height:1px;background:#9c9c9c;"></div>
<div class="b " style="left:930px;top:731px;width:1px;height:1px;background:#9c9c9c;"></div>
<div class="b " style="left:933px;top:731px;width:1px;height:1px;background:#9c9c9c;"></div>
<div class="b " style="left:936px;top:731px;width:1px;height:1px;background:#9c9c9c;"></div>
<div class="b " style="left:939px;top:731px;width:1px;height:1px;background:#9c9c9c;"></div>
<div class="b " style="left:942px;top:731px;width:1px;height:1px;background:#9c9c9c;"></div>
<div class="b " style="left:945px;top:731px;width:1px;height:1px;background:#9c9c9c;"></div>
<div class="b " style="left:948px;top:731px;width:1px;height:1px;background:#9c9c9c;"></div>
<div class="b " style="left:951px;top:731px;width:1px;height:1px;background:#9c9c9c;"></div>
<div class="b " style="left:954px;top:731px;width:1px;height:1px;background:#9c9c9c;"></div>
<div class="b " style="left:957px;top:731px;width:1px;height:1px;background:#9c9c9c;"></div>
<div class="b " style="left:960px;top:731px;width:1px;height:1px;background:#9c9c9c;"></div>
<div class="b " style="left:963px;top:731px;width:1px;height:1px;background:#9c9c9c;"></div>
<div class="b " style="left:320px;top:734px;width:1197px;height:200px;background:#fff;border:1px solid #a0a0a0;"></div>
<div class="b " style="left:327px;top:741px;width:107px;height:83px;border:1px solid #9a9a9a;border-top-color:#6e6e6e;background:linear-gradient(#fdfdfd,#e4e4e4);"></div>
<span class="t" style="left:334.10px;top:745.69px;font-size:11px;line-height:15px;letter-spacing:0.025px;color:#111;">Time needed</span>
<svg class="b" style="left:331px;top:764px;" width="18" height="18" viewBox="331 764 18 18"><path d="M341.00 773.00 L347.70 773.00 A7.7 7.7 0 1 1 343.61 766.20 Z" fill="#7f98fb" stroke="#6a82e6" stroke-width=".6"/></svg>
<svg class="b" style="left:331px;top:783px;" width="18" height="18" viewBox="331 783 18 18"><path d="M341.00 792.00 L347.70 792.00 A7.7 7.7 0 1 1 343.61 785.20 Z" fill="#f0d24a" stroke="#d0b030" stroke-width=".6"/></svg>
<svg class="b" style="left:331px;top:802px;" width="18" height="18" viewBox="331 802 18 18"><path d="M341.00 811.00 L347.70 811.00 A7.7 7.7 0 1 1 343.61 804.20 Z" fill="#6aaa2a" stroke="#559018" stroke-width=".6"/></svg>
<span class="t" style="left:357.60px;top:764.69px;font-size:11px;line-height:15px;letter-spacing:-0.104px;color:#111;">D.Smith</span>
<span class="t" style="left:357.00px;top:783.69px;font-size:11px;line-height:15px;letter-spacing:0.010px;color:#111;">J.Samplethree</span>
<span class="t" style="left:354.00px;top:803.69px;font-size:11px;line-height:15px;letter-spacing:0.292px;color:#111;">More</span>
<svg class="b" style="left:830px;top:738px;" width="250" height="195" viewBox="830 738 250 195"><path d="M840 829 V842 A80 46 0 0 0 1000 842 V829Z" fill="#776520"/><ellipse cx="920" cy="829" rx="80" ry="46" fill="#f0d24a"/><path d="M840 820.5 L920 818.2 L1000 818 V829.6 L920 829.2 L840 831.8Z" fill="#3e4d80"/><path d="M840 820.5 A80 46.4 0 0 1 1000 818 L920 818.2Z" fill="#7f98fb"/><path d="M917.2 757 L918.2 772 M1000 828.5 H1015 M923.3 874 L923.8 888" stroke="#c4c4c4" stroke-width="1.5"/></svg>
<div class="b " style="left:859px;top:735px;width:59px;height:22px;background:#fff;border:1px solid #8c8c8c;border-top:none;"></div>
<span class="t" style="left:870.75px;top:727.69px;font-size:11px;line-height:15px;letter-spacing:-0.104px;color:#111;clip-path:inset(7.4px 0 0 0);">D.Smith</span>
<span class="t" style="left:861.00px;top:741.03px;font-size:10px;line-height:13px;letter-spacing:-0.287px;color:#111;">51% - 3,38h</span>
<div class="b " style="left:1015px;top:814px;width:55px;height:30px;background:#fff;border:1px solid #8c8c8c;"></div>
<span class="t" style="left:1030.00px;top:814.69px;font-size:11px;line-height:15px;letter-spacing:0.292px;color:#111;">More</span>
<span class="t" style="left:1018.00px;top:827.03px;font-size:10px;line-height:13px;letter-spacing:-0.264px;color:#111;">0% - 0,02h</span>
<div class="b " style="left:884px;top:888px;width:79px;height:30px;background:#fff;border:1px solid #8c8c8c;"></div>
<span class="t" style="left:890.00px;top:888.69px;font-size:11px;line-height:15px;letter-spacing:0.010px;color:#111;">J.Samplethree</span>
<span class="t" style="left:896.00px;top:902.03px;font-size:10px;line-height:13px;letter-spacing:-0.287px;color:#111;">49% - 3,23h</span>
<svg class="b" style="left:1496px;top:741px;" width="15" height="15" viewBox="1496 741 15 15"><path d="M1498.6 743.6 L1507.4 752.4 M1507.4 743.6 L1498.6 752.4" stroke="#1e1e1e" stroke-width="3.3" stroke-linecap="butt"/></svg>
<svg class="b" style="left:1496px;top:762px;" width="15" height="16" viewBox="1496 762 15 16"><path d="M1497.7 763.7 H1505.2 L1508.4 766.9 V776.3 H1497.7Z" fill="#fff" stroke="#1e1e1e" stroke-width="1.1"/><path d="M1505.2 763.7 V766.9 H1508.4" fill="none" stroke="#1e1e1e" stroke-width="1"/><circle cx="1502" cy="769.8" r="3" fill="#e8f3fb" stroke="#1e1e1e" stroke-width="1.1"/><path d="M1504.2 772.2 L1508 776.2" stroke="#1e1e1e" stroke-width="1.7"/></svg>
<svg class="b" style="left:1496px;top:785px;" width="14" height="14" viewBox="1496 785 14 14"><rect x="1499.5" y="785.5" width="7" height="6.5" fill="#fff" stroke="#3b99d9" stroke-width="1"/><path d="M1501.2 787.6 H1505 M1501.2 789.6 H1505" stroke="#3b99d9" stroke-width="1"/><rect x="1496" y="790.8" width="14" height="7.2" rx="2" fill="#222"/><rect x="1498" y="795" width="10" height="2" fill="#fff"/><rect x="1498.2" y="792.2" width="1.5" height="1" fill="#fff"/></svg>
<svg class="b" style="left:1496px;top:807px;" width="15" height="15" viewBox="1496 807 15 15"><path d="M1497.2 808.2 H1509 V820 H1497.2Z" fill="#1e1e1e"/><rect x="1499.8" y="808" width="6.6" height="5.2" fill="#fff"/><rect x="1499.8" y="808" width="6.6" height="1" fill="#3b99d9"/><rect x="1500.6" y="816.4" width="5.4" height="3.8" fill="#fff"/><rect x="1503.8" y="817" width="1.4" height="2.2" fill="#1e1e1e"/></svg>
<svg class="b" style="left:1495px;top:828px;" width="17" height="16" viewBox="1495 828 17 16"><path d="M1496.4 829.6 H1502.4 V840 H1496.4Z" fill="#fff" stroke="#3b99d9" stroke-width="1"/><path d="M1497.8 832 H1500 M1497.8 834 H1500 M1497.8 836 H1500 M1497.8 838 H1500" stroke="#3b99d9" stroke-width="1" stroke-dasharray="1 .6"/><path d="M1500.5 832.5 H1506.6 L1509.6 835.5 V842.5 H1500.5Z" fill="#fff" stroke="#1e1e1e" stroke-width="1.1"/><path d="M1502.4 836.4 H1507.8 M1502.4 838.4 H1507.8 M1502.4 840.4 H1507.8" stroke="#1e1e1e" stroke-width="1"/></svg>
<div class="b " style="left:1344px;top:949px;width:83px;height:27px;background:#e1e1e1;border:1px solid #adadad;"></div>
<span class="t" style="left:1370.50px;top:954.84px;font-size:12px;line-height:16px;letter-spacing:-0.406px;">Clo<u>s</u>e</span>
<div class="b " style="left:1432px;top:949px;width:83px;height:27px;background:#e1e1e1;border:1px solid #adadad;"></div>
<span class="t" style="left:1461.00px;top:954.84px;font-size:12px;line-height:16px;letter-spacing:-0.208px;">Help</span>
</body></html>
